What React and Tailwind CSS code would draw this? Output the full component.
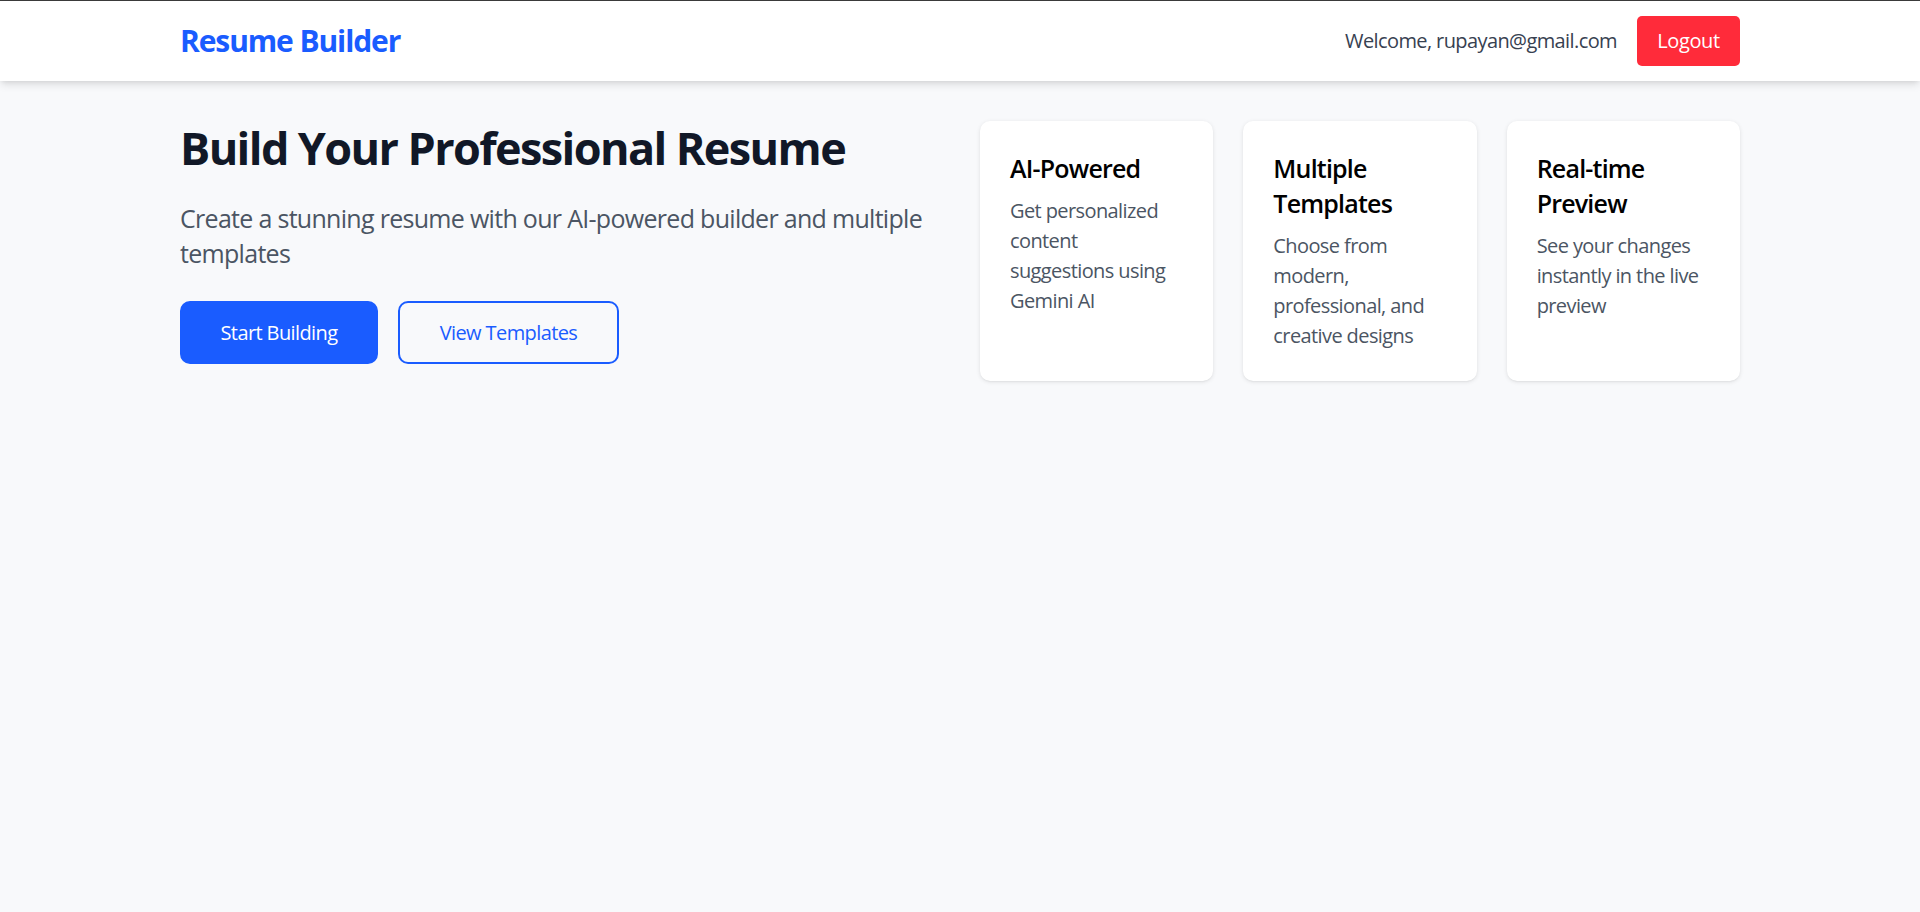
import React from "react";

const font = { fontFamily: '"Open Sans", "Noto Sans", sans-serif' };

function Card({ title, desc }) {
  return (
    <div className="bg-white rounded-[10px] p-[30px] shadow-[0_1px_4px_0_rgba(0,0,0,0.1),0_1px_2px_-1px_rgba(0,0,0,0.1)]">
      <h3 className="text-[25px] leading-[35px] font-semibold text-black mb-[10px] tracking-[-0.8px]">{title}</h3>
      <p className="text-[20px] leading-[30px] text-[#4b5563] tracking-[-0.6px]">{desc}</p>
    </div>
  );
}

export default function App() {
  return (
    <div className="min-h-[912px] bg-[#f8f9fb] border-t border-[#3c3c3c]" style={font}>
      <nav className="h-[80px] bg-white shadow-[0_5px_8px_-1px_rgba(0,0,0,0.1),0_2px_5px_-2px_rgba(0,0,0,0.1)] relative">
        <div className="max-w-[1600px] mx-auto px-[20px] h-full flex items-center justify-between">
          <div className="text-[30px] leading-[40px] font-bold text-[#1a5cff] tracking-[-1.1px]">Resume Builder</div>
          <div className="flex items-center gap-[20px]">
            <span className="text-[20px] leading-[30px] text-[#374151] tracking-[-0.6px]">Welcome, rupayan@gmail.com</span>
            <button className="h-[50px] w-[103px] rounded-[5px] bg-[#ff2b3a] text-white text-[20px] leading-[30px] tracking-[-0.4px]">Logout</button>
          </div>
        </div>
      </nav>
      <main className="max-w-[1600px] mx-auto px-[20px] py-[40px] grid grid-cols-2 gap-[40px]">
        <div>
          <h1 className="text-[45px] leading-[50px] font-bold text-[#111827] mb-[30px] tracking-[-1.6px] pt-[2px]">Build Your Professional Resume</h1>
          <p className="text-[25px] leading-[35px] text-[#4b5563] mb-[30px] tracking-[-0.7px] -mt-[2px]">
            Create a stunning resume with our AI-powered builder and multiple templates
          </p>
          <div className="flex gap-[20px]">
            <button className="w-[198px] border-2 border-[#1a5cff] bg-[#1a5cff] text-white text-[20px] leading-[30px] py-[14.5px] rounded-[10px] tracking-[-0.6px]">Start Building</button>
            <button className="w-[221px] border-2 border-[#1a5cff] bg-transparent text-[#1a5cff] text-[20px] leading-[30px] py-[14.5px] rounded-[10px] tracking-[-0.6px]">View Templates</button>
          </div>
        </div>
        <div className="grid grid-cols-3 gap-[30px]">
          <Card title="AI-Powered" desc="Get personalized content suggestions using Gemini AI" />
          <Card title="Multiple Templates" desc="Choose from modern, professional, and creative designs" />
          <Card title="Real-time Preview" desc="See your changes instantly in the live preview" />
        </div>
      </main>
    </div>
  );
}
